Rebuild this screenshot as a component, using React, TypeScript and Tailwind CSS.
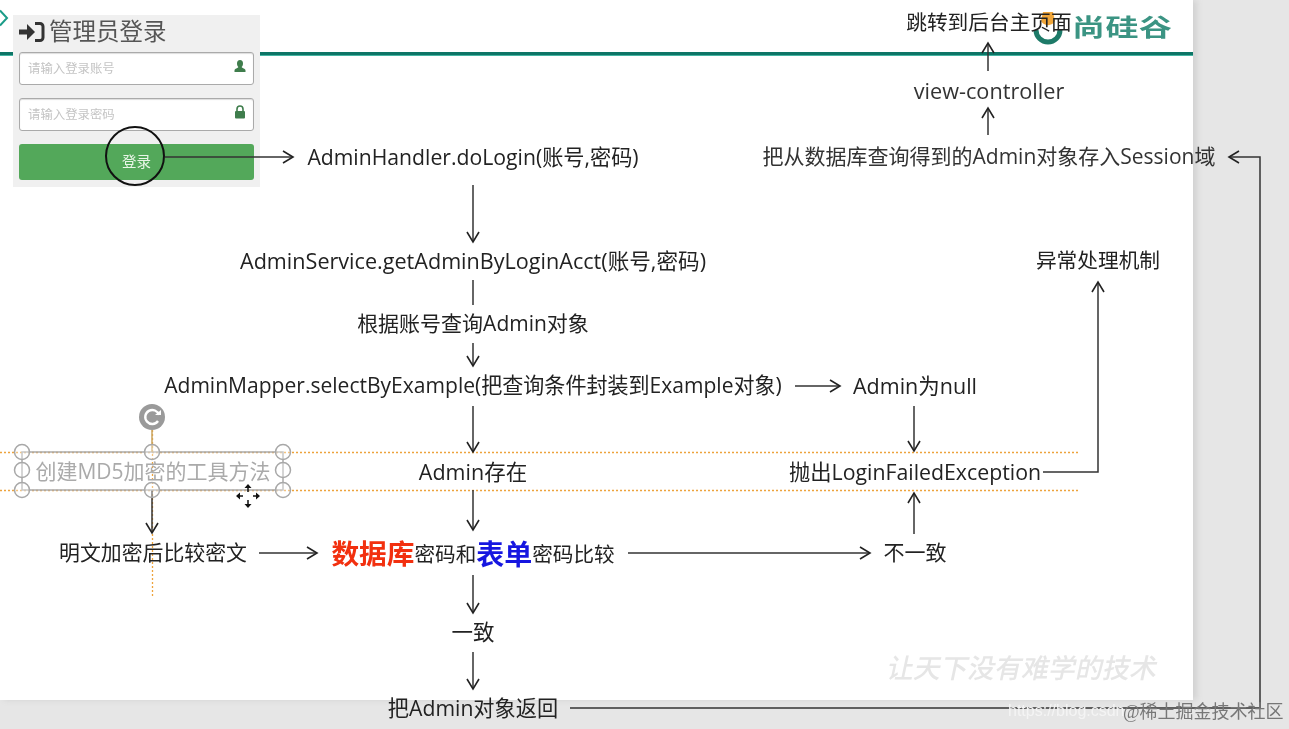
import React from 'react';

const FONT = 'font-["Open_Sans","Noto_Sans_CJK_SC",sans-serif]';

// one text node of the flow diagram, centred on its point
const Node: React.FC<{ className: string; children: React.ReactNode }> = ({ className, children }) => (
  <div className={`absolute -translate-x-1/2 -translate-y-1/2 whitespace-nowrap text-[#222] ${className}`}>{children}</div>
);

const Head: React.FC<{ x: number; y: number; dir: 'r' | 'l' | 'u' | 'd'; color?: string }> = ({ x, y, dir, color = '#222' }) => {
  const s = 10;
  const w = 6;
  const pts = {
    r: `${x - s},${y - w} ${x},${y} ${x - s},${y + w}`,
    l: `${x + s},${y - w} ${x},${y} ${x + s},${y + w}`,
    u: `${x - w},${y + s} ${x},${y} ${x + w},${y + s}`,
    d: `${x - w},${y - s} ${x},${y} ${x + w},${y - s}`,
  }[dir];
  return <polyline points={pts} fill="none" stroke={color} strokeWidth="1.6" />;
};

const handles = [
  [22, 452], [152, 452], [283, 452],
  [22, 470], [283, 470],
  [22, 490], [152, 490], [283, 490],
];

function Arrows() {
  return (
    <svg className="absolute left-0 top-0" width="1289" height="729" fill="none">
      {/* guides */}
      <path d="M0 452.5H1078M0 490.5H1078" stroke="#eda33c" strokeWidth="1.3" strokeDasharray="2 2" />
      <path d="M152.5 430V598" stroke="#eda33c" strokeWidth="1.3" strokeDasharray="2 2" />

      <g stroke="#333" strokeWidth="1.5">
        <path d="M165 157H293" />
        <path d="M473 185V242" />
        <path d="M473 280V305" />
        <path d="M473 343V366" />
        <path d="M795 386H840" />
        <path d="M473 406V452" />
        <path d="M914 406V451" />
        <path d="M473 490V530" />
        <path d="M914 534V493" />
        <path d="M1043 472H1098V282" />
        <path d="M152 490V533" />
        <path d="M259 553H317" />
        <path d="M628 553H870" />
        <path d="M473 575V613" />
        <path d="M473 652V689" />
        <path d="M570 708H1260V157H1229" />
        <path d="M988 135V108" />
        <path d="M988 71V43" />
      </g>
      <Head x={293} y={157} dir="r" />
      <Head x={473} y={242} dir="d" />
      <Head x={473} y={366} dir="d" />
      <Head x={840} y={386} dir="r" />
      <Head x={473} y={452} dir="d" />
      <Head x={914} y={451} dir="d" />
      <Head x={473} y={530} dir="d" />
      <Head x={914} y={493} dir="u" />
      <Head x={1098} y={282} dir="u" />
      <Head x={152} y={533} dir="d" />
      <Head x={317} y={553} dir="r" />
      <Head x={870} y={553} dir="r" />
      <Head x={473} y={613} dir="d" />
      <Head x={473} y={689} dir="d" />
      <Head x={1229} y={157} dir="l" />
      <Head x={988} y={108} dir="u" />
      <Head x={988} y={43} dir="u" />

      {/* circle round the login button */}
      <circle cx="135" cy="156" r="29" stroke="#111" strokeWidth="2" />

      {/* selected text box */}
      <rect x="22" y="452" width="261" height="38" stroke="#aaa" strokeWidth="1.5" />
      <path d="M152 430V452" stroke="#c9a35e" strokeWidth="1.5" />
      {handles.map(([cx, cy]) => (
        <circle key={`${cx}-${cy}`} cx={cx} cy={cy} r="7.5" stroke="#a8a8a8" strokeWidth="1.5" fill="#ffffff" fillOpacity="0.35" />
      ))}
      <circle cx="152" cy="417" r="13" fill="#9a9a9a" />
      <path d="M158 421a7 7 0 1 1 1-6" stroke="#fff" strokeWidth="2.4" />
      <path d="M155 415h6v-5z" fill="#fff" />

      {/* move cursor */}
      <g stroke="#111" strokeWidth="1.5">
        <path d="M248 487v5M248 500v5M238 496h5M253 496h5" />
      </g>
      <path d="M248 484l-3.500 4h7zM248 508l-3.500-4h7zM236 496l4-3.500v7zM260 496l-4-3.500v7z" fill="#111" />
    </svg>
  );
}

function LoginPanel() {
  return (
    <div className="absolute left-[13px] top-[15px] flex h-[172px] w-[247px] flex-col bg-[#f0f0f0] px-[6px]">
      <div className="flex h-[37px] items-center gap-[4px] pb-[4px]">
        <svg width="26" height="22" viewBox="0 0 26 22" fill="none">
          <path d="M0 8.500H8V3l8 8-8 8v-5.500H0z" fill="#333" />
          <path d="M16 2.500h5a3 3 0 0 1 3 3v11a3 3 0 0 1-3 3h-5" stroke="#333" strokeWidth="3" />
        </svg>
        <span className="text-[23.5px] leading-none text-[#555]">管理员登录</span>
      </div>
      <div className="flex h-[33px] items-center justify-between rounded-[3px] border border-[#aaa] bg-white pl-[8px] pr-[7px] shadow-[inset_0_1px_1px_#ddd]">
        <span className="pt-[1px] text-[12.400px] text-[#c4c4c4]">请输入登录账号</span>
        <svg width="12" height="14" viewBox="0 0 12 14" fill="#3f7d4c" className="mb-[5px]">
          <path d="M6 1c2 0 3 1.400 3 3.400C9 6 8.300 7.300 7.600 8c.2 1 3.900 1.700 3.900 3.500V13H.5v-1.500C.5 9.700 4.200 9 4.400 8 3.700 7.300 3 6 3 4.400 3 2.400 4 1 6 1z" />
        </svg>
      </div>
      <div className="mt-[13px] flex h-[33px] items-center justify-between rounded-[3px] border border-[#aaa] bg-white pl-[8px] pr-[7px] shadow-[inset_0_1px_1px_#ddd]">
        <span className="pt-[1px] text-[12.400px] text-[#c4c4c4]">请输入登录密码</span>
        <svg width="12" height="14" viewBox="0 0 12 14" fill="none" className="mb-[5px]">
          <path d="M3 6V4a3 3 0 0 1 6 0v2" stroke="#3f7d4c" strokeWidth="1.6" />
          <rect x="1" y="6" width="10" height="7.500" rx="1" fill="#3f7d4c" />
        </svg>
      </div>
      <div className="mt-[13px] flex h-[36px] items-center justify-center rounded-[3px] bg-[#53a85a] pb-[1px] text-[14.500px] text-[#e8f5e6]">
        登录
      </div>
    </div>
  );
}

export default function App() {
  return (
    <div className={`relative h-[729px] w-[1289px] overflow-hidden bg-[#e6e6e6] blur-[0.4px] ${FONT}`}>
      {/* slide */}
      <div className="h-[700px] w-[1193px] bg-white pt-[52px] shadow-[4px_0_6px_#d2d2d2]">
        <div className="h-[4px] border-b border-[#45b5a3] bg-[#0d7566]" />
      </div>

      {/* chevron left of the panel */}
      <svg className="absolute left-0 top-[9px]" width="9" height="18" fill="none">
        <path d="M0 1.500L7 9 0 16.500" stroke="#1b9c88" strokeWidth="2" />
      </svg>

      {/* logo */}
      <svg className="absolute left-[1030px] top-[12px]" width="36" height="36" fill="none">
        <path d="M11 9a8 8 0 0 0 14 0L23 0h-10z" fill="#f0a63a" />
        <path d="M6 18a12 12 0 1 0 24 0" stroke="#1d7a68" strokeWidth="5" />
      </svg>
      <div className="absolute left-[1072px] top-[8px] origin-center scale-y-[0.72] text-[33px] font-bold leading-[38px] tracking-[0.5px] text-[#3b9483]">尚硅谷</div>

      <LoginPanel />
      <Arrows />

      <Node className="left-[989px] top-[23px] text-[20.700px]">跳转到后台主页面</Node>
      <Node className="left-[989px] top-[91px] text-[21.700px] text-[#333]">view-controller</Node>
      <Node className="left-[989px] top-[157px] text-[21px] text-[#333]">把从数据库查询得到的Admin对象存入Session域</Node>
      <Node className="left-[473px] top-[157px] text-[21.200px]">AdminHandler.doLogin(账号,密码)</Node>
      <Node className="left-[473px] top-[261px] text-[21.600px]">AdminService.getAdminByLoginAcct(账号,密码)</Node>
      <Node className="left-[473px] top-[324px] text-[21px]">根据账号查询Admin对象</Node>
      <Node className="left-[473px] top-[386px] text-[21.050px]">AdminMapper.selectByExample(把查询条件封装到Example对象)</Node>
      <Node className="left-[915px] top-[386px] text-[21.500px]">Admin为null</Node>
      <Node className="left-[1098px] top-[261px] text-[20.700px]">异常处理机制</Node>
      <Node className="left-[473px] top-[472px] text-[21.500px]">Admin存在</Node>
      <Node className="left-[915px] top-[472px] text-[21.300px]">抛出LoginFailedException</Node>
      <Node className="left-[153px] top-[472px] text-[21px] !text-[#aaa]">创建MD5加密的工具方法</Node>
      <Node className="left-[153px] top-[553px] text-[20.900px]">明文加密后比较密文</Node>
      <Node className="left-[915px] top-[553px] text-[21px]">不一致</Node>
      <Node className="left-[473px] top-[632px] text-[21.500px]">一致</Node>
      <Node className="left-[473px] top-[708px] text-[21.200px]">把Admin对象返回</Node>
      <Node className="left-[473px] top-[554px] flex items-center text-[20.600px]">
        <span className="text-[27.700px] font-bold text-[#f2300f]">数据库</span>
        <span>密码和</span>
        <span className="text-[28px] font-bold text-[#1616e0]">表单</span>
        <span>密码比较</span>
      </Node>

      {/* watermarks */}
      <div className="absolute left-[888px] top-[652px] -skew-x-12 text-[27px] font-medium leading-[32px] text-[#e6e6e6]">让天下没有难学的技术</div>
      <div className='absolute left-[1008px] top-[701px] text-[16px] leading-[20px] text-[#f4f4f4] font-["Liberation_Sans",sans-serif]'>https://blog.csdn</div>
      <div className='absolute left-[1123px] top-[700px] text-[18px] leading-[24px] text-[#777] font-["Liberation_Serif","Noto_Sans_CJK_SC",serif]'>@稀土掘金技术社区</div>
    </div>
  );
}
